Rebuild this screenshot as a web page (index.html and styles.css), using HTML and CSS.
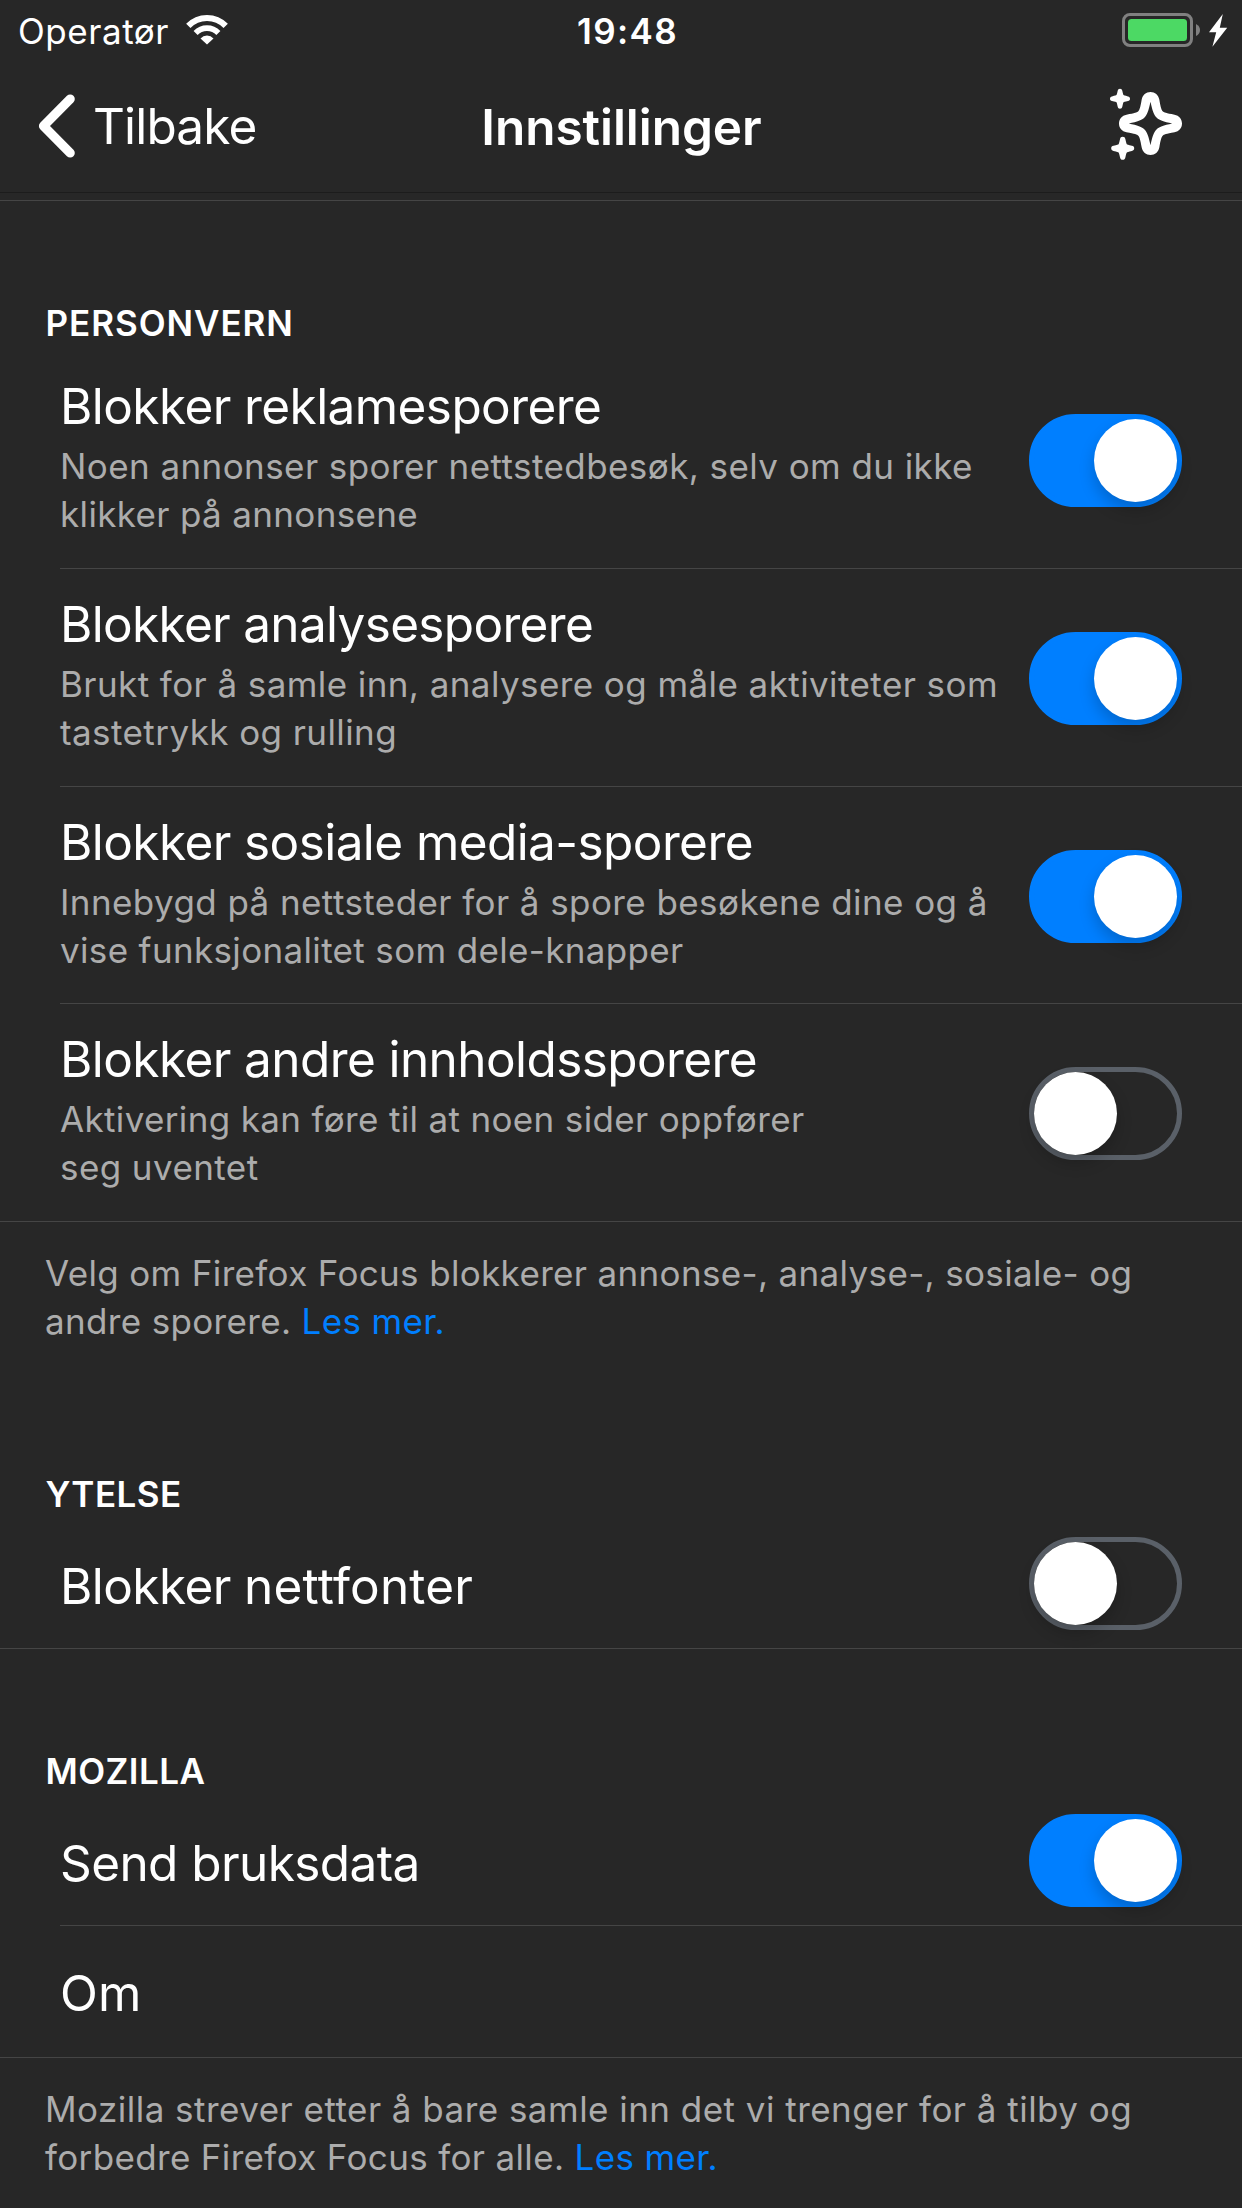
FILE: index.html
```
<!DOCTYPE html>
<html lang="nb">
<head>
<meta charset="utf-8">
<title>Innstillinger</title>
<link rel="stylesheet" href="styles.css">
</head>
<body>
<header class="top">
  <div class="status">
    <div class="carrier">
      <span class="carrier-name">Operatør</span>
      <svg class="wifi" width="44" height="32" viewBox="-22 -30 44 32">
        <g fill="none" stroke="#fff">
          <path stroke-width="6" d="M-18.7-18.1A26 26 0 0 1 18.7-18.1"/>
          <path stroke-width="5.6" d="M-11.4-11A15.8 15.8 0 0 1 11.4-11"/>
        </g>
        <path fill="#fff" d="M0 .5L-6.5-5.6A9 9 0 0 1 6.5-5.6Z"/>
      </svg>
    </div>
    <span class="clock">19:48</span>
    <svg class="battery" width="106" height="36" viewBox="0 0 106 36">
      <rect x="1.5" y="2.5" width="68" height="31" rx="6.5" fill="none" stroke="#808080" stroke-width="3"/>
      <rect x="6" y="7" width="59" height="22" rx="3.5" fill="#4cd964"/>
      <path d="M74 12Q78 14 78 18T74 24Z" fill="#808080"/>
      <path d="M100.8 2L87 20.3H94.2L90.4 34.8L105.2 15.8H97.8Z" fill="#fff"/>
    </svg>
  </div>
  <nav class="nav">
    <a class="back">
      <svg width="40" height="66" viewBox="0 0 40 66"><path d="M34.2 6L7.5 33L34.2 60" fill="none" stroke="#fff" stroke-width="9.2" stroke-linecap="round" stroke-linejoin="round"/></svg>
      <span>Tilbake</span>
    </a>
    <h1 class="title">Innstillinger</h1>
    <svg class="sparkle" width="73" height="73" viewBox="0 0 73 73" fill="#fff">
      <path transform="translate(40.5 35.5)" fill-rule="evenodd" d="M0-31.5C4.5-31.5 8-28.5 8.8-24C10.3-15.5 11-13.5 12.2-12.2C13.5-11 15.5-10.3 24-8.8C28.5-8 31.5-4.5 31.5 0C31.5 4.5 28.5 8 24 8.8C15.5 10.3 13.5 11 12.2 12.2C11 13.5 10.3 15.5 8.8 24C8 28.5 4.5 31.5 0 31.5C-4.5 31.5-8 28.5-8.8 24C-10.3 15.5-11 13.5-12.2 12.2C-13.5 11-15.5 10.3-24 8.8C-28.5 8-31.5 4.5-31.5 0C-31.5-4.5-28.5-8-24-8.8C-15.5-10.3-13.5-11-12.2-12.2C-11-13.5-10.3-15.5-8.8-24C-8-28.5-4.5-31.5 0-31.5ZM0-21.7C-1.8-13-3.5-8.5-6-6C-8.5-3.5-13-1.8-21.7 0C-13 1.8-8.5 3.5-6 6C-3.5 8.5-1.8 13 0 21.7C1.8 13 3.5 8.5 6 6C8.5 3.5 13 1.8 21.7 0C13-1.8 8.5-3.5 6-6C3.5-8.5 1.8-13 0-21.7Z"/>
      <path id="spark" transform="translate(10 10.7)" d="M0-10C1.4-10 2-9.3 2.3-8C3-4.8 3.3-3.9 3.6-3.6C3.9-3.3 4.8-3 8-2.3C9.3-2 10-1.4 10 0C10 1.4 9.3 2 8 2.3C4.8 3 3.9 3.3 3.6 3.6C3.3 3.9 3 4.8 2.3 8C2 9.3 1.4 10 0 10C-1.4 10-2 9.3-2.3 8C-3 4.8-3.3 3.9-3.6 3.6C-3.9 3.3-4.8 3-8 2.3C-9.3 2-10 1.4-10 0C-10-1.4-9.3-2-8-2.3C-4.8-3-3.9-3.3-3.6-3.6C-3.3-3.9-3-4.8-2.3-8C-2-9.3-1.4-10 0-10Z"/>
      <use href="#spark" transform="translate(1.2 48) scale(1.15)"/>
    </svg>
  </nav>
</header>
<main class="settings">
  <section class="group privacy">
    <h2 class="heading wide">PERSONVERN</h2>
    <div class="row tall">
      <div><div class="label">Blokker reklamesporere</div>
      <p class="desc">Noen annonser sporer nettstedbesøk, selv om du ikke<br><span class="tight">klikker på annonsene</span></p></div>
      <span class="switch on"></span>
    </div>
    <div class="row tall">
      <div><div class="label narrow">Blokker analysesporere</div>
      <p class="desc">Brukt for å samle inn, analysere og måle aktiviteter som<br>tastetrykk og rulling</p></div>
      <span class="switch on"></span>
    </div>
    <div class="row tall short">
      <div><div class="label">Blokker sosiale media-sporere</div>
      <p class="desc">Innebygd på nettsteder for å spore besøkene dine og å<br><span class="tight">vise funksjonalitet som dele-knapper</span></p></div>
      <span class="switch on"></span>
    </div>
    <div class="row tall last">
      <div><div class="label">Blokker andre innholdssporere</div>
      <p class="desc"><span class="tight">Aktivering kan føre til at noen sider oppfører</span><br>seg uventet</p></div>
      <span class="switch"></span>
    </div>
    <p class="note"><span class="tight">Velg om Firefox Focus blokkerer annonse-, analyse-, sosiale- og<br>andre sporere. <a class="link">Les mer.</a></span></p>
  </section>
  <section class="group performance">
    <h2 class="heading">YTELSE</h2>
    <div class="row last">
      <div class="label">Blokker <span class="loose">nettfonter</span></div>
      <span class="switch"></span>
    </div>
  </section>
  <section class="group mozilla">
    <h2 class="heading">MOZILLA</h2>
    <div class="row">
      <div class="label">Send bruksdata</div>
      <span class="switch on"></span>
    </div>
    <div class="row last about">
      <div class="label"><span class="loose">Om</span></div>
    </div>
    <p class="note">Mozilla strever etter å bare samle inn det vi trenger for å tilby og<br><span class="tight">forbedre Firefox Focus for alle. <a class="link">Les mer.</a></span></p>
  </section>
</main>
</body>
</html>
```
FILE: styles.css
```
* { box-sizing: border-box; }

body {
  margin: 0;
  height: 2208px;
  overflow: hidden;
  background: #272727;
  color: #fff;
  font-family: Inter, "Liberation Sans", sans-serif;
  white-space: nowrap;
}

h1, h2, p { margin: 0; }
svg { display: block; flex: none; }

/* status bar and navigation bar */
.top { height: 201px; border-bottom: 1px solid #454545; }

.status {
  display: grid;
  grid-template-columns: 1fr auto 1fr;
  height: 62px;
  padding: 0 14px 0 18px;
  font-size: 35px;
  line-height: 62px;
}
.carrier { display: flex; gap: 16px; }
.carrier-name { letter-spacing: 0.54px; }
.wifi { margin-top: 14px; }
.clock { padding-left: 9px; font-weight: 600; letter-spacing: 1.4px; }
.battery { justify-self: end; margin-top: 12px; }

.nav {
  display: grid;
  grid-template-columns: 1fr auto 1fr;
  height: 131px;
  padding: 34px 59px 0 36px;
  border-bottom: 1px solid #1c1c1c;
  font-size: 49.5px;
  line-height: 60px;
}
.back { display: flex; gap: 17px; letter-spacing: -0.85px; }
.back svg { margin-top: -3px; }
.title {
  margin: 1px -24px 0 0;
  font-size: 49.5px;
  font-weight: 600;
  letter-spacing: -0.05px;
}
.sparkle { justify-self: end; margin-top: -8px; }

/* groups */
.privacy { padding-top: 99px; }
.performance { padding-top: 126px; }
.mozilla { padding-top: 99px; }

.heading {
  padding-left: 45.5px;
  font-size: 35px;
  font-weight: 600;
  line-height: 46px;
  letter-spacing: 0.45px;
}
.wide { margin-bottom: 5px; letter-spacing: 0.95px; }

.row {
  display: flex;
  justify-content: space-between;
  align-items: flex-start;
  height: 132px;
  margin-left: 60px;
  padding: 20px 60px 0 0;
  border-bottom: 1px solid #454545;
}
.row > .label { margin-top: 19px; }
.row.about > .label { margin-top: 17px; }
.row.last { margin-left: 0; padding-left: 60px; }
.row.tall { height: 218px; padding-top: 25px; }
.row.short { height: 217px; }
.row.tall .switch { margin-top: 38px; }

.label { font-size: 49.5px; line-height: 60px; letter-spacing: -0.58px; }
.narrow { letter-spacing: -0.68px; }
.loose { letter-spacing: 0.2px; }

.desc, .note {
  color: #acacac;
  font-size: 35px;
  line-height: 48px;
  letter-spacing: 0.42px;
}
.desc { margin-top: 6px; }
.note { padding: 27px 0 0 45px; letter-spacing: 0.47px; }
.tight { letter-spacing: 0.345px; }
.link { color: #007fff; }

.switch {
  display: flex;
  flex: none;
  width: 153px;
  height: 93px;
  border: 5px solid #5a6068;
  border-radius: 47px;
}
.switch::after {
  content: "";
  width: 83px;
  height: 83px;
  border-radius: 50%;
  background: #fff;
  box-shadow: 0 8px 16px rgba(0, 0, 0, 0.2);
}
.switch.on {
  justify-content: flex-end;
  border-color: #007fff;
  background: #007fff;
}
```
